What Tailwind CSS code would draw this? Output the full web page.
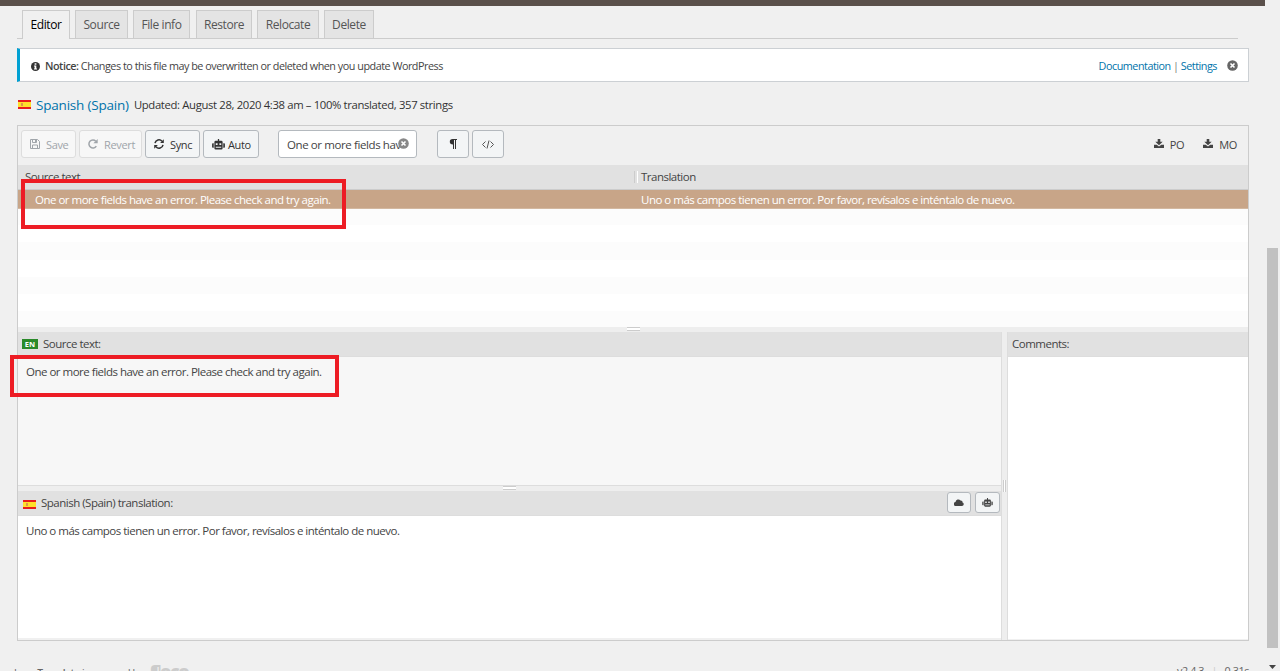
<!DOCTYPE html>
<html lang="en">
<head>
  <meta charset="UTF-8" />
  <meta name="viewport" content="width=device-width, initial-scale=1.0"/>
  <title>Loco Translate - Editor</title>
  <script src="https://cdn.jsdelivr.net/npm/@tailwindcss/browser@4"></script>
  <style>
    body {
      font-family: 'Open Sans', 'Noto Sans', sans-serif;
    }
  </style>
</head>
<body class="relative h-[671px] overflow-hidden bg-[#f0f0f0] text-[11.5px] leading-4 tracking-[-0.5px] text-[#444]">

  <!-- shared icons -->
  <svg class="hidden">
    <symbol id="robot" viewBox="0 0 14 12">
      <path fill="currentColor" fill-rule="evenodd" d="M6.3 0h1.4v2H10q1.5 0 1.5 1.5V10q0 1.5-1.5 1.5H4Q2.5 11.500 2.500 10V3.500Q2.500 2 4 2h2.300zM4 4.500v2h2v-2zM8 4.500v2h2v-2zM4 8.500v1h6v-1zM0 5.500q0-.8.8-.8H1.800v4.800H.8Q0 9.500 0 8.700zM12.200 4.700h1q.8 0 .8.8v3.200q0 .8-.8.8h-1z"/>
    </symbol>
    <symbol id="download" viewBox="0 0 10 9">
      <path fill="currentColor" fill-rule="evenodd" d="M3.700 0h2.600v2.800h2.400L5 6.300 1.300 2.800h2.400zM0 5.800h2.700L5 7.600l2.300-1.800H10V9H0z"/>
    </symbol>
    <symbol id="spain" viewBox="0 0 13 9">
      <path fill="#e81c1c" d="M0 0h13v9H0z"/>
      <path fill="#ffe02a" d="M0 2h13v5H0z"/>
      <path fill="#e0954a" d="M3 3h2v3H3z"/>
    </symbol>
    <symbol id="close" viewBox="0 0 11 11">
      <circle cx="5.500" cy="5.500" r="5.300" fill="currentColor"/>
      <path d="M3.500 3.500l4 4M7.500 3.500l-4 4" stroke="#fff" stroke-width="1.600"/>
    </symbol>
  </svg>

  <div class="h-[6px] w-[1265px] bg-[#5a504b]"></div>

  <!-- tabs -->
  <nav class="ml-[17px] mt-1 flex h-[29px] w-[1221px] border-b border-[#ccc] pl-[5px] text-[12px] tracking-[-0.4px] text-[#555]">
    <a class="h-[29px] w-12 border border-b-0 border-[#ccc] bg-[#f0f0f0] pt-[6px] text-center text-black">Editor</a>
    <a class="ml-[5px] w-[53px] border border-b-0 border-[#ccc] bg-[#e4e4e4] pt-[6px] text-center">Source</a>
    <a class="ml-[5px] w-[57px] border border-b-0 border-[#ccc] bg-[#e4e4e4] pt-[6px] text-center">File info</a>
    <a class="ml-[6px] w-[56px] border border-b-0 border-[#ccc] bg-[#e4e4e4] pt-[6px] text-center">Restore</a>
    <a class="ml-[5px] w-[62px] border border-b-0 border-[#ccc] bg-[#e4e4e4] pt-[6px] text-center">Relocate</a>
    <a class="ml-[5px] w-[50px] border border-b-0 border-[#ccc] bg-[#e4e4e4] pt-[6px] text-center">Delete</a>
  </nav>

  <!-- notice -->
  <div class="ml-[17px] mt-[9px] flex h-[34px] w-[1232px] items-center border border-l-[3px] border-[#ccd0d4] border-l-[#00a0d2] bg-white pl-[11px] pr-[10px] text-[10.8px] tracking-[-0.48px]">
    <svg class="mr-[5px] mt-0.5 size-[9px]" viewBox="0 0 10 10"><circle cx="5" cy="5" r="5" fill="#333"/><path fill="#fff" d="M4 1.500h2V3H4zM3.300 4h2.600v3.300h.8v1H3.300v-1H4V5h-.7z"/></svg>
    <span class="pt-0.5"><b class="font-semibold">Notice:</b> Changes to this file may be overwritten or deleted when you update WordPress</span>
    <span class="ml-auto mr-[10px] pt-0.5 text-[#0073aa]">Documentation <span class="text-[#777]">|</span> Settings</span>
    <svg class="size-[11px] text-[#666]"><use href="#close"/></svg>
  </div>

  <h3 class="ml-[18px] flex h-[43px] items-center pt-[3px]">
    <svg class="mr-[5px] h-[9px] w-[13px] -translate-y-px"><use href="#spain"/></svg>
    <span class="mr-[5px] text-[13.5px] tracking-[-0.2px] text-[#0073aa]">Spanish (Spain)</span>
    <span class="text-[11.3px] tracking-[-0.35px] text-[#333]">Updated: August 28, 2020 4:38 am – 100% translated, 357 strings</span>
  </h3>

  <!-- editor -->
  <main class="ml-[17px] flex h-[516px] w-[1232px] flex-col border border-[#ccc]">
    <div class="flex h-[39px] shrink-0 items-center pb-[3px] pl-[3px] pr-[11px] text-[11px] tracking-[-0.35px]">
      <button class="flex h-7 w-[55px] items-center rounded-[3px] border border-[#ddd] bg-[#f7f7f7] pl-2 pt-0.5 text-[#a0a5aa]">
        <svg class="mr-[6px] size-[10px] -translate-y-px" viewBox="0 0 10 10" fill="none" stroke="currentColor"><path d="M.5.5h7l2 2v7h-9zM2.500.5v3h4v-3M2.500 9.500v-3.500h5v3.500M5.500 1v2"/></svg>Save
      </button>
      <button class="ml-[3px] flex h-7 w-[63px] items-center rounded-[3px] border border-[#ddd] bg-[#f7f7f7] pl-2 pt-0.5 text-[#a0a5aa]">
        <svg class="mr-[6px] size-[10px] -translate-y-px" viewBox="0 0 10 10"><path d="M8.300 7.200A4 4 0 1 1 7.800 2.200" fill="none" stroke="currentColor" stroke-width="1.500"/><path fill="currentColor" d="M9.700 0v4.300H5.400z"/></svg>Revert
      </button>
      <button class="ml-[3px] flex h-7 w-[55px] items-center rounded-[3px] border border-[#b4b9be] bg-[#f3f5f6] pl-2 pt-0.5 text-[#333]">
        <svg class="mr-[6px] size-[10px] -translate-y-px" viewBox="0 0 10 10"><path d="M1 4.200A4 4 0 0 1 8 2.200M9 5.800A4 4 0 0 1 2 7.800" fill="none" stroke="currentColor" stroke-width="1.500"/><path fill="currentColor" d="M9.800.3v3.700H6.100zM.2 9.700V6h3.700z"/></svg>Sync
      </button>
      <button class="ml-[3px] flex h-7 w-[56px] items-center rounded-[3px] border border-[#b4b9be] bg-[#f3f5f6] pl-2 pt-0.5 text-[#333]">
        <svg class="mr-[3px] h-[11px] w-[13px] -translate-y-px"><use href="#robot"/></svg>Auto
      </button>
      <div class="relative ml-[19px] flex h-7 w-[139px] items-center rounded-[3px] border border-[#b4b9be] bg-white pl-2 pt-0.5 text-[11.5px] tracking-[-0.4px]">
        <span class="whitespace-nowrap">One or more fields hav</span>
        <svg class="absolute right-[7px] top-[7px] size-[11px] text-[#888]"><use href="#close"/></svg>
      </div>
      <button class="ml-5 flex h-7 w-8 items-center justify-center rounded-[3px] border border-[#b4b9be] bg-[#f3f5f6] text-[#333]">
        <svg class="h-[10px] w-2" viewBox="0 0 8 10"><path fill="currentColor" d="M3.500 0H8v1H7v9H6V1H5v9H4V5.500Q.8 5.500.8 2.800.8 0 3.500 0z"/></svg>
      </button>
      <button class="ml-[3px] flex h-7 w-8 items-center justify-center rounded-[3px] border border-[#b4b9be] bg-[#f3f5f6] text-[#555]">
        <svg class="h-[9px] w-3" viewBox="0 0 12 9" fill="none" stroke="currentColor"><path d="M3.500 1.500l-3 3 3 3M8.500 1.500l3 3-3 3M7 .5L5 8.500"/></svg>
      </button>
      <svg class="ml-auto mr-[6px] h-[9px] w-[10px] -translate-y-px"><use href="#download"/></svg><span class="pt-0.5">PO</span>
      <svg class="ml-[19px] mr-[6px] h-[9px] w-[10px] -translate-y-px"><use href="#download"/></svg><span class="pt-0.5">MO</span>
    </div>

    <div class="flex h-[25px] shrink-0 items-center border-b border-[#ccc] bg-[#e1e1e1]">
      <span class="w-[616px] pl-[7px]">Source text</span>
      <span class="mr-[3px] h-3 w-[4px] border-x border-x-white border-l-[#ccc]"></span>
      <span>Translation</span>
    </div>
    <div class="flex h-[19px] shrink-0 items-center border-b border-[#d3b8a0] bg-[#c8a588] pt-[2px] text-white">
      <span class="w-[623px] pl-[17px]">One or more fields have an error. Please check and try again.</span>
      <span>Uno o más campos tienen un error. Por favor, revísalos e inténtalo de nuevo.</span>
    </div>
    <div class="h-[118px] shrink-0 overflow-hidden bg-white">
      <div class="h-4 bg-[#fcfcfc]"></div>
      <div class="mt-[17px] h-[17.5px] bg-[#fcfcfc]"></div>
      <div class="mt-[17px] h-[17.5px] bg-[#fcfcfc]"></div>
      <div class="mt-[17px] h-[17.5px] bg-[#fcfcfc]"></div>
    </div>
    <div class="flex h-[5px] shrink-0 justify-center bg-[#eee]">
      <span class="h-1 w-[13px] border-y border-[#ccc] bg-white"></span>
    </div>

    <div class="flex min-h-0 grow">
      <div class="flex w-[983px] flex-col">
        <div class="flex h-[25px] shrink-0 items-center border-b border-[#ddd] bg-[#e1e1e1] pl-1">
          <span class="mr-[5px] h-[10px] w-4 bg-[#2a8a2a] text-center text-[7.5px] font-bold leading-[10px] tracking-normal text-white">EN</span>Source text:
        </div>
        <div class="h-[129px] shrink-0 border-b border-[#ddd] bg-[#f7f7f7] pl-2 pt-[7px]">One or more fields have an error. Please check and try again.</div>
        <div class="flex h-[5px] shrink-0 justify-center bg-[#eee]">
          <span class="h-1 w-[13px] border-y border-[#ccc] bg-white"></span>
        </div>
        <div class="flex h-[25px] shrink-0 items-center border-b border-[#ddd] bg-[#e1e1e1] pl-[5px] pr-[1px]">
          <svg class="mr-[5px] mt-0.5 h-[9px] w-[13px]"><use href="#spain"/></svg>Spanish (Spain) translation:
          <button class="mb-0.5 ml-auto flex h-[21px] w-6 items-center justify-center rounded-[3px] border border-[#b4b9be] bg-[#f3f5f6] text-[#444]">
            <svg class="h-[7px] w-[10px]" viewBox="0 0 10 7"><path fill="currentColor" d="M2.200 7A2 2 0 0 1 1.500 3 2.800 2.800 0 0 1 6.500 1.500 1.700 1.700 0 0 1 8.500 3.500 1.800 1.800 0 0 1 8 7z"/></svg>
          </button>
          <button class="mb-0.5 ml-1 flex h-[21px] w-[25px] items-center justify-center rounded-[3px] border border-[#b4b9be] bg-[#f3f5f6] text-[#444]">
            <svg class="h-[9px] w-[11px]"><use href="#robot"/></svg>
          </button>
        </div>
        <div class="h-[122px] shrink-0 bg-white pl-2 pt-[7px]">Uno o más campos tienen un error. Por favor, revísalos e inténtalo de nuevo.</div>
      </div>
      <div class="flex w-[7px] items-center border-x border-[#ddd] bg-[#eee]">
        <span class="ml-px h-3 w-[3px] border-x border-[#ccc] bg-white"></span>
      </div>
      <div class="flex grow flex-col">
        <div class="flex h-[25px] items-center border-b border-[#ddd] bg-[#e1e1e1] pl-1">Comments:</div>
        <div class="mb-px grow bg-white"></div>
      </div>
    </div>
  </main>

  <footer class="ml-[14px] mt-[24px] flex w-[1235px] text-[10.3px] tracking-[-0.45px] text-[#666]">
    <span class="w-[136px] whitespace-nowrap">Loco <span class="font-semibold">Translate</span> is powered by</span>
    <span class="-mt-0.5 text-[18px] font-extrabold leading-4 tracking-[-1.5px] text-[#ccc]">¶oco</span>
    <span class="-mt-[2px] ml-auto text-[10.8px] tracking-[-0.4px]">v2.4.3 <span class="mx-[5px] text-[#ccc]">|</span> 0.31s</span>
  </footer>

  <!-- highlight boxes -->
  <div class="absolute left-[21px] top-[179px] h-[50px] w-[325px] border-4 border-[#ed1c24]"></div>
  <div class="absolute left-[10px] top-[355px] h-[42px] w-[329px] border-4 border-[#ed1c24]"></div>

  <!-- scrollbar -->
  <div class="absolute right-[2px] top-[248px] h-[400px] w-[11px] bg-[#c1c1c1]"></div>
  <svg class="absolute right-[4px] top-[665px] h-1 w-[7px]" viewBox="0 0 7 4"><path fill="#444" d="M0 0h7L3.500 4z"/></svg>
</body>
</html>
